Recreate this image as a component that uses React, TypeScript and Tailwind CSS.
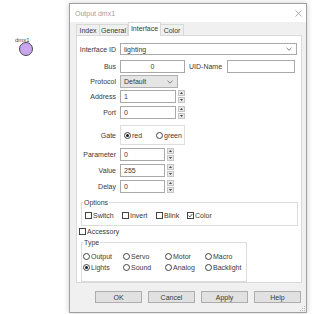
import React from "react";

const Chevron = () => (
  <svg width="6" height="4" viewBox="0 0 6 4" className="block">
    <polyline points="0.5,0.8 3,3.2 5.5,0.8" fill="none" stroke="#606060" strokeWidth="0.8" />
  </svg>
);

const Spin = () => (
  <div className="ml-[2px] flex flex-col w-[7px] h-[13px] gap-[1px]">
    <div className="flex-1 bg-[#e8e8e8] border border-[#c4c4c4] flex items-center justify-center">
      <svg width="3" height="2" viewBox="0 0 3 2" className="block">
        <polygon points="0,2 1.5,0 3,2" fill="#444" />
      </svg>
    </div>
    <div className="flex-1 bg-[#e8e8e8] border border-[#c4c4c4] flex items-center justify-center">
      <svg width="3" height="2" viewBox="0 0 3 2" className="block">
        <polygon points="0,0 1.5,2 3,0" fill="#444" />
      </svg>
    </div>
  </div>
);

const Input = ({ w, value, center }: { w: string; value: string; center?: boolean }) => (
  <div
    className={`${w} h-[13px] border border-[#a9a9a9] bg-white flex items-center px-[3px] ${
      center ? "justify-center" : ""
    }`}
  >
    {value}
  </div>
);

const Radio = ({ checked }: { checked?: boolean }) => (
  <span className="w-[7px] h-[7px] shrink-0 rounded-full border border-[#444] bg-white flex items-center justify-center">
    {checked && <span className="w-[3px] h-[3px] rounded-full bg-[#1a1a1a]" />}
  </span>
);

const Check = ({ checked }: { checked?: boolean }) => (
  <span className="w-[7px] h-[7px] shrink-0 border border-[#444] bg-white flex items-center justify-center">
    {checked && (
      <svg width="5" height="5" viewBox="0 0 5 5" className="block">
        <polyline points="0.6,2.6 1.9,3.9 4.4,1" fill="none" stroke="#222" strokeWidth="0.8" />
      </svg>
    )}
  </span>
);

const Label = ({ children }: { children: React.ReactNode }) => (
  <div className="w-[39px] text-right shrink-0">{children}</div>
);

export default function App() {
  return (
    <div className="relative w-[320px] h-[314px] bg-white overflow-hidden font-['Liberation_Sans',Arial,sans-serif] text-[7px] leading-[9px] text-[#3a3a3a]">
      {/* node on canvas */}
      <div className="absolute left-[19px] top-[42px] w-[14px] h-[14px] rounded-full bg-[#c9a6ef] border border-[#4a4a4a]" />
      <div className="absolute left-[15px] top-[36px] text-[6px] leading-[8px] text-[#444]">dmx1</div>

      {/* dialog window */}
      <div className="absolute left-[69px] top-[3px] w-[238px] h-[310px] border border-[#a0a0a0] bg-[#f0f0f0] shadow-[0_0_6px_rgba(0,0,0,0.2)] flex flex-col">
        <div className="h-[18px] bg-white flex items-center justify-between pl-[5px] pr-[4px] text-[#a0a0a0]">
          <span>Output dmx1</span>
          <svg width="7" height="7" viewBox="0 0 7 7" className="block">
            <line x1="0.5" y1="0.5" x2="6.5" y2="6.5" stroke="#9a9a9a" strokeWidth="0.8" />
            <line x1="6.5" y1="0.5" x2="0.5" y2="6.5" stroke="#9a9a9a" strokeWidth="0.8" />
          </svg>
        </div>

        <div className="flex flex-col pl-[6px] pr-[4px]">
          {/* tabs */}
          <div className="h-[13px] flex items-end">
            <div className="w-[24px] h-[11px] border border-b-0 border-[#d9d9d9] flex items-center justify-center">Index</div>
            <div className="w-[28px] h-[11px] border border-b-0 border-l-0 border-[#d9d9d9] flex items-center justify-center">General</div>
            <div className="relative z-10 -mb-[1px] w-[33px] h-[14px] bg-white border border-b-0 border-[#d9d9d9] flex items-center justify-center pb-[2px]">Interface</div>
            <div className="w-[23px] h-[11px] border border-b-0 border-l-0 border-[#d9d9d9] flex items-center justify-center">Color</div>
          </div>

          {/* panel */}
          <div className="h-[248px] bg-white border border-[#d9d9d9] flex flex-col pt-[7px]">
            <div className="flex items-center h-[12px]">
              <Label>Interface ID</Label>
              <div className="ml-[4px] w-[177px] h-[12px] border border-[#a9a9a9] bg-white flex items-center justify-between pl-[3px] pr-[4px]">
                <span>lighting</span>
                <Chevron />
              </div>
            </div>

            <div className="flex items-center h-[13px] mt-[5px]">
              <Label>Bus</Label>
              <div className="ml-[4px]">
                <Input w="w-[65px]" value="0" center />
              </div>
              <div className="ml-[4px] w-[38px]">UID-Name</div>
              <Input w="w-[68px]" value="" />
            </div>

            <div className="flex items-center h-[13px] mt-[2px]">
              <Label>Protocol</Label>
              <div className="ml-[4px] w-[58px] h-[13px] border border-[#b0b0b0] bg-[#e5e5e5] flex items-center justify-between pl-[3px] pr-[4px]">
                <span>Default</span>
                <Chevron />
              </div>
            </div>

            <div className="flex items-center h-[13px] mt-[2px]">
              <Label>Address</Label>
              <div className="ml-[4px] flex items-center">
                <Input w="w-[56px]" value="1" />
                <Spin />
              </div>
            </div>

            <div className="flex items-center h-[13px] mt-[3px]">
              <Label>Port</Label>
              <div className="ml-[4px] flex items-center">
                <Input w="w-[56px]" value="0" />
                <Spin />
              </div>
            </div>

            <div className="flex items-center h-[20px] mt-[6px]">
              <Label>Gate</Label>
              <div className="ml-[4px] w-[65px] h-[20px] border border-[#dedede] flex items-center pl-[3px]">
                <div className="flex items-center gap-[1px] w-[32px]">
                  <Radio checked />
                  <span>red</span>
                </div>
                <div className="flex items-center gap-[1px]">
                  <Radio />
                  <span>green</span>
                </div>
              </div>
            </div>

            {[
              ["Parameter", "0"],
              ["Value", "255"],
              ["Delay", "0"],
            ].map(([l, v]) => (
              <div key={l} className="flex items-center h-[13px] mt-[3px]">
                <Label>{l}</Label>
                <div className="ml-[4px] flex items-center">
                  <Input w="w-[45px]" value={v} />
                  <Spin />
                </div>
              </div>
            ))}

            <fieldset className="mt-[5px] ml-[4px] mr-[3px] border border-[#dcdcdc]">
              <legend className="ml-[1px] px-[1px] leading-[9px]">Options</legend>
              <div className="flex items-center h-[8px] pl-[3px] mt-[4px] mb-[6px]">
                <div className="w-[37px] flex items-center gap-[1px]">
                  <Check />
                  <span>Switch</span>
                </div>
                <div className="w-[34px] flex items-center gap-[1px]">
                  <Check />
                  <span>Invert</span>
                </div>
                <div className="w-[31px] flex items-center gap-[1px]">
                  <Check />
                  <span>Blink</span>
                </div>
                <div className="flex items-center gap-[1px]">
                  <Check checked />
                  <span>Color</span>
                </div>
              </div>
            </fieldset>

            <div className="flex items-center h-[8px] mt-[1px] ml-[2px] gap-[1px]">
              <Check />
              <span>Accessory</span>
            </div>

            <fieldset className="mt-[3px] ml-[4px] w-[166px] border border-[#dcdcdc]">
              <legend className="ml-[1px] px-[1px] leading-[9px]">Type</legend>
              <div className="flex flex-col pl-[1px] mt-[5px] mb-[10px] gap-[3px]">
                {[
                  [["Output", false], ["Servo", false], ["Motor", false], ["Macro", false]],
                  [["Lights", true], ["Sound", false], ["Analog", false], ["Backlight", false]],
                ].map((row, i) => (
                  <div key={i} className="flex items-center h-[8px]">
                    {row.map(([name, checked], j) => (
                      <div
                        key={name as string}
                        className={`flex items-center gap-[1px] ${
                          j === 0 ? "w-[40px]" : j === 1 ? "w-[42px]" : j === 2 ? "w-[40px]" : ""
                        }`}
                      >
                        <Radio checked={checked as boolean} />
                        <span>{name as string}</span>
                      </div>
                    ))}
                  </div>
                ))}
              </div>
            </fieldset>
          </div>

          {/* buttons */}
          <div className="mt-[8px] flex justify-end gap-[6px] pr-[1px]">
            {["OK", "Cancel", "Apply", "Help"].map((b) => (
              <div
                key={b}
                className="w-[47px] h-[12px] bg-[#e1e1e1] border border-[#adadad] flex items-center justify-center"
              >
                {b}
              </div>
            ))}
          </div>
        </div>

        {/* resize grip */}
        <svg width="5" height="5" viewBox="0 0 5 5" className="absolute right-[1px] bottom-[1px] block">
          <rect x="4" y="0" width="1" height="1" fill="#b5b5b5" />
          <rect x="2" y="2" width="1" height="1" fill="#b5b5b5" />
          <rect x="4" y="2" width="1" height="1" fill="#b5b5b5" />
          <rect x="0" y="4" width="1" height="1" fill="#b5b5b5" />
          <rect x="2" y="4" width="1" height="1" fill="#b5b5b5" />
          <rect x="4" y="4" width="1" height="1" fill="#b5b5b5" />
        </svg>
      </div>
    </div>
  );
}
